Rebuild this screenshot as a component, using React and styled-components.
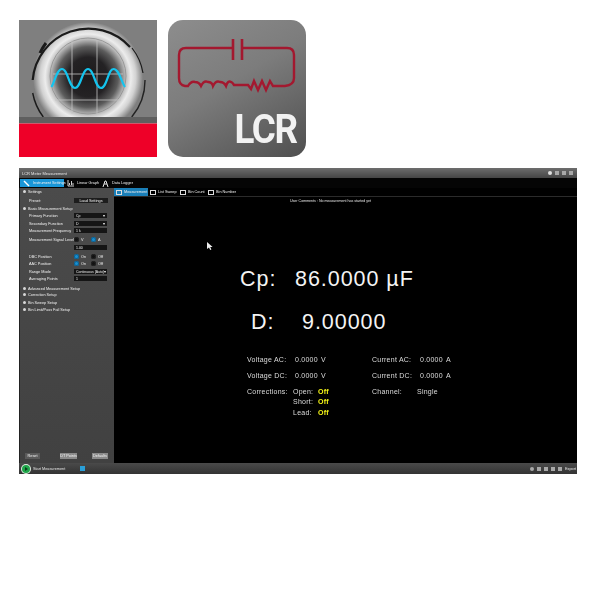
import styled, { createGlobalStyle } from "styled-components";

const GlobalStyle = createGlobalStyle`
  html, body {
    margin: 0;
    padding: 0;
    background: #fff;
    font-family: "Liberation Sans", Arial, sans-serif;
  }
`;

const Page = styled.div`
  width: 600px;
  height: 600px;
  padding: 20px 23px 0 19px;
  box-sizing: border-box;
  overflow: hidden;
`;

const IconRow = styled.div`
  display: flex;
  gap: 11px;
`;

const ScopeTile = styled.svg`
  display: block;
  width: 138px;
  height: 137px;
`;

const LcrTile = styled.div`
  width: 138px;
  height: 137px;
  border-radius: 15px;
  background: linear-gradient(150deg, #8d8d8d 0%, #7c7c7c 45%, #4f4f4f 100%);
  overflow: hidden;
  display: flex;
  flex-direction: column;
  justify-content: space-between;
`;

const Circuit = styled.svg`
  display: block;
  width: 138px;
  height: 80px;
  filter: blur(0.3px);
`;

const LcrLabel = styled.div`
  align-self: flex-end;
  margin: 0 9px 10px 0;
  font-family: Roboto, "Liberation Sans", sans-serif;
  font-weight: 700;
  font-size: 40px;
  line-height: 34px;
  letter-spacing: -1.5px;
  color: #f2f2f2;
  transform: scaleX(0.92);
  transform-origin: right center;
`;

const Window = styled.div`
  position: relative;
  margin-top: 11px;
  width: 558px;
  height: 306px;
  background: #000;
  display: flex;
  flex-direction: column;
`;

const TitleBar = styled.div`
  height: 10px;
  background: linear-gradient(#6d6d6d, #454545);
  color: #e8e8e8;
  font-size: 4px;
  display: flex;
  align-items: center;
  padding: 0 3px;
  justify-content: space-between;
  flex: none;
  filter: blur(0.35px);
`;

const WinButtons = styled.div`
  display: flex;
  gap: 3px;
  padding-right: 1px;
`;

const WinButton = styled.span`
  width: 4px;
  height: 4px;
  border-radius: ${(p) => (p.$round ? "50%" : "0")};
  background: ${(p) => (p.$round ? "#e0e0e0" : "#a8a8a8")};
`;

const TabBar = styled.div`
  height: 10px;
  background: #050505;
  display: flex;
  align-items: stretch;
  padding: 1px 0 1px 1px;
  box-sizing: border-box;
  flex: none;
`;

const MainTab = styled.div`
  display: flex;
  align-items: center;
  gap: 3px;
  padding: 0 2px 0 3px;
  font-size: 3.8px;
  white-space: nowrap;
  color: #f0f0f0;
  background: ${(p) => (p.$active ? "#1a97d8" : "transparent")};
  width: ${(p) => p.$w}px;
  box-sizing: border-box;
  filter: blur(0.3px);
`;

const TabIcon = styled.svg`
  width: 7px;
  height: 7px;
  flex: none;
`;

const Body = styled.div`
  flex: 1;
  display: flex;
  min-height: 0;
`;

const Sidebar = styled.div`
  width: 95px;
  flex: none;
  background: linear-gradient(#4b4b4b, #414141);
  border-left: 1px solid #222;
  color: #f0f0f0;
  font-size: 3.8px;
  display: flex;
  flex-direction: column;
  padding: 0 6px 4px 3px;
  box-sizing: border-box;
  filter: blur(0.35px);
`;

const SideRow = styled.div`
  height: 7px;
  margin-top: ${(p) => p.$gap || 0}px;
  display: flex;
  align-items: center;
  padding-left: ${(p) => p.$indent || 0}px;
`;

const SideLabel = styled.span`
  width: ${(p) => p.$w || 45}px;
  flex: none;
  white-space: nowrap;
`;

const Select = styled.span`
  width: 33px;
  height: 5px;
  background: #151515;
  color: #eee;
  display: flex;
  align-items: center;
  justify-content: space-between;
  padding: 0 2px;
  box-sizing: border-box;
  white-space: nowrap;
  font-size: 3.5px;
`;

const LoadButton = styled.span`
  width: 34px;
  height: 5px;
  background: #1d1d1d;
  display: flex;
  align-items: center;
  justify-content: center;
`;

const Bullet = styled.span`
  width: 3px;
  height: 3px;
  border-radius: 50%;
  background: #d8d8d8;
  margin-right: 2px;
  flex: none;
`;

const Radio = styled.span`
  display: flex;
  align-items: center;
  gap: 2px;
  width: 26px;
  &::before {
    content: "";
    width: 5px;
    height: 5px;
    border-radius: 50%;
    background: ${(p) => (p.$on ? "#1a8fd0" : "#111")};
    box-shadow: inset 0 0 0 1px ${(p) => (p.$on ? "#0c5f90" : "#222")};
  }
`;

const SideFooter = styled.div`
  margin-top: auto;
  display: flex;
  padding-left: 2px;
`;

const FootButton = styled.span`
  width: ${(p) => p.$w}px;
  height: 6px;
  margin-left: ${(p) => p.$gap || 0}px;
  background: ${(p) => (p.$dim ? "#5a5a5a" : "#8a8a8a")};
  color: #f4f4f4;
  display: flex;
  align-items: center;
  justify-content: center;
  white-space: nowrap;
`;

const Content = styled.div`
  flex: 1;
  display: flex;
  flex-direction: column;
  min-width: 0;
`;

const SubTabs = styled.div`
  height: 8px;
  display: flex;
  align-items: stretch;
  border-bottom: 1px solid #2b2b2b;
  flex: none;
`;

const SubTab = styled.div`
  display: flex;
  align-items: center;
  gap: 2px;
  padding: 0 0 0 ${(p) => (p.$active ? 2 : 0)}px;
  margin-right: ${(p) => (p.$active ? 2 : 0)}px;
  font-size: 3.8px;
  white-space: nowrap;
  color: #eee;
  background: ${(p) => (p.$active ? "#1a7fb8" : "transparent")};
  width: ${(p) => p.$w}px;
  box-sizing: border-box;
  filter: blur(0.3px);
`;

const TabGlyph = styled.span`
  width: 6px;
  height: 5px;
  border: 1px solid #ddd;
  box-sizing: border-box;
  flex: none;
`;

const Comments = styled.div`
  text-align: center;
  font-size: 3.6px;
  color: #e8e8e8;
  line-height: 6px;
  margin-top: 1px;
  padding-right: 30px;
  filter: blur(0.3px);
`;

const Readout = styled.div`
  margin-top: ${(p) => p.$top}px;
  margin-left: ${(p) => p.$left}px;
  display: flex;
  font-size: 21.5px;
  line-height: 26px;
  letter-spacing: 0.95px;
  color: #f4f4f4;
  white-space: nowrap;
`;

const ReadLabel = styled.span`
  width: ${(p) => p.$w}px;
`;

const Details = styled.div`
  margin-top: 16px;
  margin-left: 133px;
  display: grid;
  grid-template-columns: 48px 26px 51px 48px 26px 20px;
  grid-auto-rows: 16px;
  font-size: 7px;
  letter-spacing: 0.25px;
  color: #dcdcdc;
  align-items: center;
  white-space: nowrap;
  filter: blur(0.25px);
`;

const Corrections = styled.div`
  margin-top: 3px;
  margin-left: 133px;
  display: grid;
  grid-template-columns: 46px 25px 54px 45px 30px;
  grid-auto-rows: 10.5px;
  font-size: 7px;
  letter-spacing: 0.25px;
  color: #dcdcdc;
  align-items: center;
  white-space: nowrap;
  filter: blur(0.25px);
`;

const OffValue = styled.span`
  color: #f5f516;
  font-weight: 700;
`;

const StatusBar = styled.div`
  height: 11px;
  background: linear-gradient(#4a4a4a, #333);
  display: flex;
  align-items: center;
  justify-content: space-between;
  padding: 0 1px 0 3px;
  font-size: 3.8px;
  color: #e6e6e6;
  flex: none;
  filter: blur(0.3px);
`;

const StatusLeft = styled.div`
  display: flex;
  align-items: center;
`;

const PlayButton = styled.span`
  width: 8px;
  height: 8px;
  border-radius: 50%;
  background: #1fa64a;
  box-shadow: 0 0 0 1px #dfeee0;
  margin-right: 3px;
  flex: none;
  display: flex;
  align-items: center;
  justify-content: center;
  &::after {
    content: "";
    border-left: 3px solid #0c3d1c;
    border-top: 2px solid transparent;
    border-bottom: 2px solid transparent;
    margin-left: 1px;
  }
`;

const StatusChip = styled.span`
  width: 5px;
  height: 5px;
  background: #2a9fd8;
  margin-left: 15px;
`;

const StatusIcons = styled.div`
  display: flex;
  align-items: center;
  gap: 3px;
`;

const StatusIcon = styled.span`
  width: 4px;
  height: 4px;
  background: #a8a8a8;
  border-radius: ${(p) => (p.$round ? "50%" : "0")};
`;

const Pointer = styled.svg`
  position: absolute;
  left: 188px;
  top: 74px;
  width: 6px;
  height: 8px;
`;

function ScopeIcon() {
  return (
    <ScopeTile viewBox="0 0 138 137">
      <defs>
        <radialGradient id="lens" cx="50%" cy="50%" r="50%">
          <stop offset="0%" stopColor="#1c1a1b" />
          <stop offset="36%" stopColor="#242224" />
          <stop offset="55%" stopColor="#5c5c5c" />
          <stop offset="68%" stopColor="#b8b8b8" />
          <stop offset="78%" stopColor="#ececec" />
          <stop offset="87%" stopColor="#d2d2d2" />
          <stop offset="100%" stopColor="#7f7f7f" />
        </radialGradient>
        <clipPath id="face">
          <rect width="138" height="97" />
        </clipPath>
      </defs>
      <rect width="138" height="97" fill="#7f7f7f" />
      <g clipPath="url(#face)">
        <circle cx="69" cy="57" r="55" fill="url(#lens)" />
        <circle cx="69" cy="56" r="38" fill="none" stroke="#8f8f8f" strokeWidth="0.8" />
        <path d="M34 54H104M36 80H102M53 20V94M78 20V94" stroke="#c4c4c4" strokeWidth="0.8" fill="none" />
        <path d="M13.7 60A56 56 0 0 1 111 27" fill="none" stroke="#1b1b1b" strokeWidth="2.2" />
        <path d="M27 23A52 52 0 0 0 21 33" fill="none" stroke="#1b1b1b" strokeWidth="3" />
        <path d="M113 28A55 55 0 0 1 124 53" fill="none" stroke="#1b1b1b" strokeWidth="1.2" />
        <path d="M13.7 73A57 57 0 0 0 24.3 97" fill="none" stroke="#1b1b1b" strokeWidth="1.4" />
        <path d="M126 60A57 57 0 0 1 112.7 97" fill="none" stroke="#222" strokeWidth="1.4" />
      </g>
      <path
        d="M32.5 67C36 61 38 49 43 49C49 49 50 68 56 68C62 68 63 49 69 49C75 49 76 68 82 68C88 68 89 49 94.5 49C100 49 102 61 106 67"
        fill="none"
        stroke="#14c4ee"
        strokeWidth="2.2"
      />
      <rect y="97" width="138" height="6.5" fill="#5f5f5f" />
      <rect y="103.5" width="138" height="33.5" fill="#ee0028" />
    </ScopeTile>
  );
}

function LcrIcon() {
  return (
    <LcrTile>
      <Circuit viewBox="0 0 138 80">
        <g fill="none" stroke="#a3182f" strokeWidth="2.4">
          <path d="M65 28H18Q11 28 11 35V58Q11 65 17 66L20 66Q23 61 27 62Q31 62 33 66Q36 60 40 62Q44 62 45 66Q48 60 52 62Q56 62 58 66Q60 60 63 62Q64 62 66 65H80L83 69L86 61L90 70L94 61L98 70L102 61L105 66H117Q126 65 126 58V35Q126 28 119 28H74" />
          <path d="M65 19V40M74 19V40" strokeWidth="2.6" />
        </g>
      </Circuit>
      <LcrLabel>LCR</LcrLabel>
    </LcrTile>
  );
}

function WrenchIcon() {
  return (
    <TabIcon viewBox="0 0 7 7">
      <path d="M1 1L6 6" stroke="#fff" strokeWidth="1.4" />
    </TabIcon>
  );
}

function GraphIcon() {
  return (
    <TabIcon viewBox="0 0 7 7">
      <path d="M1 0V6H7M2.5 5V3M4.5 5V1M6 5V3" stroke="#e8e8e8" strokeWidth="0.9" fill="none" />
    </TabIcon>
  );
}

function LoggerIcon() {
  return (
    <TabIcon viewBox="0 0 7 7">
      <path d="M1 7L3 1H4L6 7M2 4H5" stroke="#e8e8e8" strokeWidth="1" fill="none" />
    </TabIcon>
  );
}

export default function App() {
  return (
    <Page>
      <GlobalStyle />
      <IconRow>
        <ScopeIcon />
        <LcrIcon />
      </IconRow>
      <Window>
        <TitleBar>
          <span>LCR Meter Measurement</span>
          <WinButtons>
            <WinButton $round />
            <WinButton />
            <WinButton />
            <WinButton />
          </WinButtons>
        </TitleBar>
        <TabBar>
          <MainTab $active $w={44}>
            <WrenchIcon />
            Instrument Settings
          </MainTab>
          <MainTab $w={35}>
            <GraphIcon />
            Linear Graph
          </MainTab>
          <MainTab $w={40}>
            <LoggerIcon />
            Data Logger
          </MainTab>
        </TabBar>
        <Body>
          <Sidebar>
            <SideRow>
              <Bullet />
              Settings
            </SideRow>
            <SideRow $gap={2} $indent={6}>
              <SideLabel $w={45}>Preset:</SideLabel>
              <LoadButton>Load Settings</LoadButton>
            </SideRow>
            <SideRow $gap={1}>
              <Bullet />
              Basic Measurement Setup
            </SideRow>
            <SideRow $indent={6}>
              <SideLabel>Primary Function</SideLabel>
              <Select>
                Cp<span>▾</span>
              </Select>
            </SideRow>
            <SideRow $gap={1} $indent={6}>
              <SideLabel>Secondary Function</SideLabel>
              <Select>
                D<span>▾</span>
              </Select>
            </SideRow>
            <SideRow $indent={6}>
              <SideLabel>Measurement Frequency</SideLabel>
              <Select>1 k</Select>
            </SideRow>
            <SideRow $gap={2} $indent={6}>
              <SideLabel>Measurement Signal Level</SideLabel>
              <Radio>V</Radio>
              <Radio $on>A</Radio>
            </SideRow>
            <SideRow $gap={1} $indent={51}>
              <Select>1.00</Select>
            </SideRow>
            <SideRow $gap={2} $indent={6}>
              <SideLabel>DBC Position</SideLabel>
              <Radio $on>On</Radio>
              <Radio>Off</Radio>
            </SideRow>
            <SideRow $indent={6}>
              <SideLabel>AAC Position</SideLabel>
              <Radio $on>On</Radio>
              <Radio>Off</Radio>
            </SideRow>
            <SideRow $gap={1} $indent={6}>
              <SideLabel>Range Mode</SideLabel>
              <Select>
                Continuous [Auto]<span>▾</span>
              </Select>
            </SideRow>
            <SideRow $indent={6}>
              <SideLabel>Averaging Points</SideLabel>
              <Select>1</Select>
            </SideRow>
            <SideRow $gap={3}>
              <Bullet />
              Advanced Measurement Setup
            </SideRow>
            <SideRow $gap={-1}>
              <Bullet />
              Correction Setup
            </SideRow>
            <SideRow $gap={1}>
              <Bullet />
              Bin Sweep Setup
            </SideRow>
            <SideRow>
              <Bullet />
              Bin Limit/Pass Fail Setup
            </SideRow>
            <SideFooter>
              <FootButton $dim $w={15}>
                Reset
              </FootButton>
              <FootButton $w={17} $gap={20}>
                DT Points
              </FootButton>
              <FootButton $w={16} $gap={15}>
                Defaults
              </FootButton>
            </SideFooter>
          </Sidebar>
          <Content>
            <SubTabs>
              <SubTab $active $w={34}>
                <TabGlyph />
                Measurement
              </SubTab>
              <SubTab $w={30}>
                <TabGlyph />
                List Sweep
              </SubTab>
              <SubTab $w={28}>
                <TabGlyph />
                Bin Count
              </SubTab>
              <SubTab $w={30}>
                <TabGlyph />
                Bin Number
              </SubTab>
            </SubTabs>
            <Comments>User Comments : No measurement has started yet</Comments>
            <Readout $top={62} $left={126}>
              <ReadLabel $w={55}>Cp:</ReadLabel>
              86.0000 µF
            </Readout>
            <Readout $top={17} $left={137}>
              <ReadLabel $w={51}>D:</ReadLabel>
              9.00000
            </Readout>
            <Details>
              <span>Voltage AC:</span>
              <span>0.0000</span>
              <span>V</span>
              <span>Current AC:</span>
              <span>0.0000</span>
              <span>A</span>
              <span>Voltage DC:</span>
              <span>0.0000</span>
              <span>V</span>
              <span>Current DC:</span>
              <span>0.0000</span>
              <span>A</span>
            </Details>
            <Corrections>
              <span>Corrections:</span>
              <span>Open:</span>
              <OffValue>Off</OffValue>
              <span>Channel:</span>
              <span>Single</span>
              <span />
              <span>Short:</span>
              <OffValue>Off</OffValue>
              <span />
              <span />
              <span />
              <span>Lead:</span>
              <OffValue>Off</OffValue>
            </Corrections>
          </Content>
        </Body>
        <StatusBar>
          <StatusLeft>
            <PlayButton />
            Start Measurement
            <StatusChip />
          </StatusLeft>
          <StatusIcons>
            <StatusIcon $round />
            <StatusIcon />
            <StatusIcon />
            <StatusIcon />
            <StatusIcon />
            <span>Export</span>
          </StatusIcons>
        </StatusBar>
        <Pointer viewBox="0 0 6 8">
          <path d="M0 0V7L2 5.5L3.2 8L4.4 7.4L3.2 5H5.6Z" fill="#eee" />
        </Pointer>
      </Window>
    </Page>
  );
}
